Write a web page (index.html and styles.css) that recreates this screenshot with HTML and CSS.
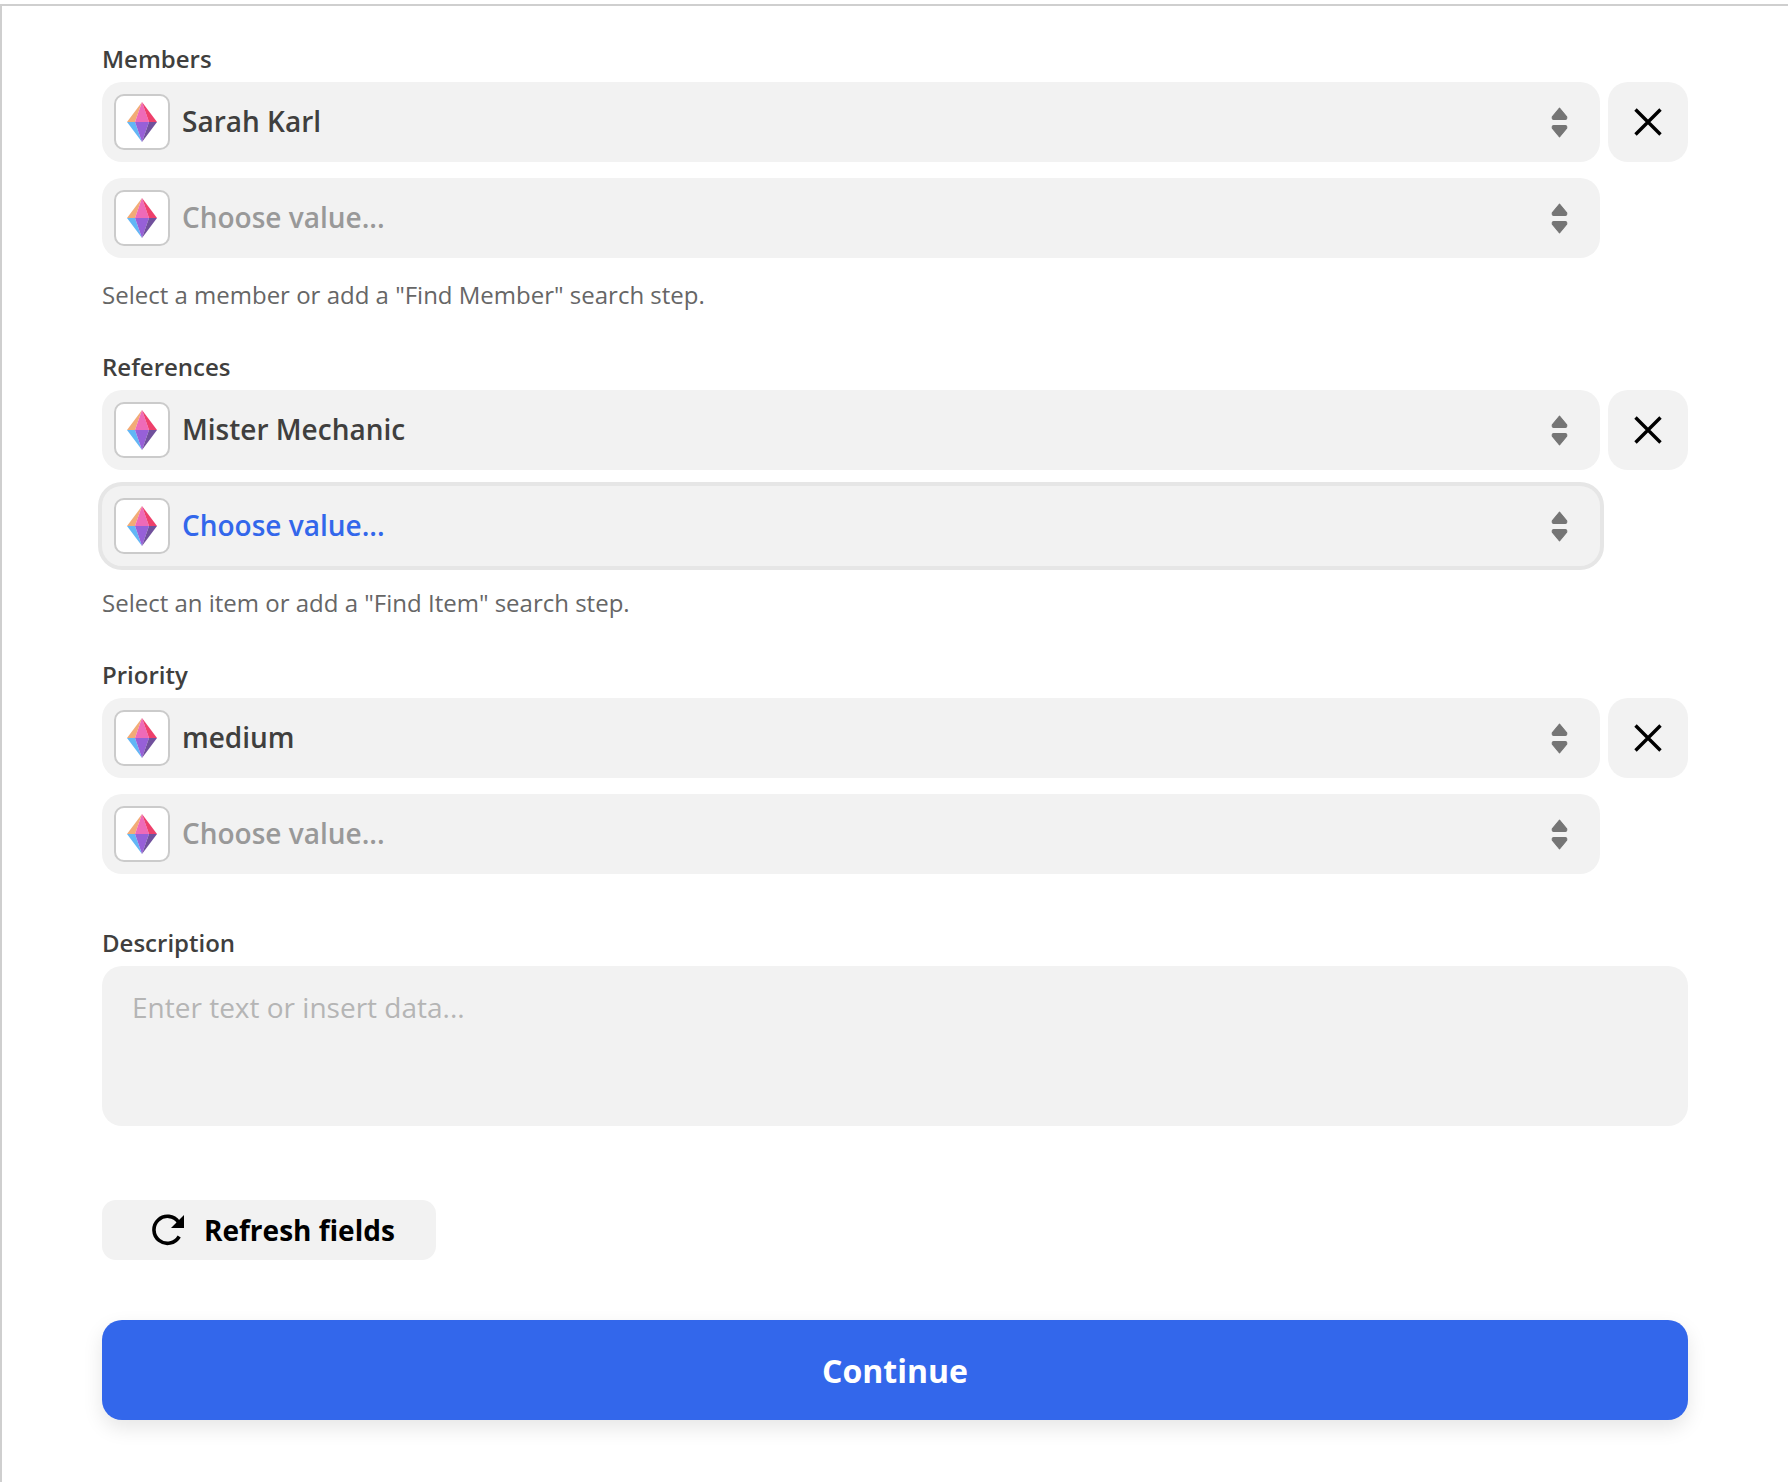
FILE: index.html
```html
<!DOCTYPE html>
<html>
  <head>
    <meta charset="UTF-8" />
    <title>Action setup</title>
    <link rel="stylesheet" href="styles.css">
  </head>
  <body>
    <svg class="defs" width="0" height="0">
      <symbol id="gem" viewBox="0 0 30 40">
        <polygon points="15,0 0,20 8,20" fill="#f2ab76" />
        <polygon points="15,0 8,20 22,20" fill="#ee6ab8" />
        <polygon points="15,0 22,20 30,20" fill="#ee3f6b" />
        <polygon points="0,20 8,20 15,40" fill="#62b6f5" />
        <polygon points="8,20 22,20 15,40" fill="#9760d8" />
        <polygon points="22,20 30,20 15,40" fill="#70509c" />
      </symbol>
      <symbol id="updown" viewBox="0 0 16 30">
        <path d="M8 1 L15 9.5 Q15.5 12 13.5 12 L2.5 12 Q0.5 12 1 9.5 Z" fill="#757575" stroke="#757575" stroke-width="1" stroke-linejoin="round" />
        <path d="M8 29 L15 20.5 Q15.5 18 13.5 18 L2.5 18 Q0.5 18 1 20.5 Z" fill="#757575" stroke="#757575" stroke-width="1" stroke-linejoin="round" />
      </symbol>
      <symbol id="cross" viewBox="0 0 28 28">
        <path d="M1.5 1.5 L26.5 26.5 M26.5 1.5 L1.5 26.5" stroke="#000" stroke-width="3.4" fill="none" />
      </symbol>
    </svg>

    <div class="frame">
      <section class="group">
        <div class="label">Members</div>
        <div class="row">
          <div class="select">
            <span class="app-icon"><svg class="gem"><use href="#gem" /></svg></span>
            <span class="value">Sarah Karl</span>
            <svg class="updown"><use href="#updown" /></svg>
          </div>
          <button class="remove"><svg class="cross"><use href="#cross" /></svg></button>
        </div>
        <div class="row">
          <div class="select">
            <span class="app-icon"><svg class="gem"><use href="#gem" /></svg></span>
            <span class="value empty">Choose value...</span>
            <svg class="updown"><use href="#updown" /></svg>
          </div>
        </div>
        <div class="help">Select a member or add a "Find Member" search step.</div>
      </section>

      <section class="group">
        <div class="label">References</div>
        <div class="row">
          <div class="select">
            <span class="app-icon"><svg class="gem"><use href="#gem" /></svg></span>
            <span class="value">Mister Mechanic</span>
            <svg class="updown"><use href="#updown" /></svg>
          </div>
          <button class="remove"><svg class="cross"><use href="#cross" /></svg></button>
        </div>
        <div class="row">
          <div class="select focused">
            <span class="app-icon"><svg class="gem"><use href="#gem" /></svg></span>
            <span class="value active">Choose value...</span>
            <svg class="updown"><use href="#updown" /></svg>
          </div>
        </div>
        <div class="help">Select an item or add a "Find Item" search step.</div>
      </section>

      <section class="group last-select">
        <div class="label">Priority</div>
        <div class="row">
          <div class="select">
            <span class="app-icon"><svg class="gem"><use href="#gem" /></svg></span>
            <span class="value">medium</span>
            <svg class="updown"><use href="#updown" /></svg>
          </div>
          <button class="remove"><svg class="cross"><use href="#cross" /></svg></button>
        </div>
        <div class="row">
          <div class="select">
            <span class="app-icon"><svg class="gem"><use href="#gem" /></svg></span>
            <span class="value empty">Choose value...</span>
            <svg class="updown"><use href="#updown" /></svg>
          </div>
        </div>
      </section>

      <section class="group description">
        <div class="label">Description</div>
        <div class="textarea">Enter text or insert data...</div>
      </section>

      <button class="refresh">
        <svg class="refresh-icon" viewBox="0 0 33 33">
          <path d="M27.2 22.5 A13.5 13.5 0 1 1 26.6 8.2" fill="none" stroke="#000" stroke-width="3.6" />
          <polygon points="32,1 32,14 19,14" fill="#000" />
        </svg>
        Refresh fields
      </button>

      <button class="continue">Continue</button>
    </div>
  </body>
</html>
```

FILE: styles.css
```css
html, body {
  margin: 0;
  background: #fff;
}
body {
  font-family: 'Open Sans', sans-serif;
  color: #403f3e;
}
button {
  font-family: inherit;
  border: none;
  cursor: pointer;
}
.defs {
  display: block;
  height: 0;
}
.frame {
  box-sizing: border-box;
  height: 1478px;
  margin-top: 4px;
  padding: 38px 100px 0;
  border-top: 2px solid #cfcfcf;
  border-left: 2px solid #cfcfcf;
}
.group {
  width: 1586px;
  margin-bottom: 38px;
}
.label {
  height: 30px;
  margin-bottom: 8px;
  font-size: 24px;
  line-height: 30px;
  font-weight: 600;
}
.row {
  display: flex;
  gap: 8px;
  margin-bottom: 16px;
}
.select {
  display: flex;
  align-items: center;
  box-sizing: border-box;
  width: 1498px;
  height: 80px;
  padding: 0 32px 0 12px;
  background: #f2f2f2;
  border-radius: 20px;
}
.select.focused {
  box-shadow: 0 0 0 4px #e6e6e6;
}
.app-icon {
  display: flex;
  align-items: center;
  justify-content: center;
  box-sizing: border-box;
  width: 56px;
  height: 56px;
  background: #fff;
  border: 2px solid #cbcbcb;
  border-radius: 10px;
}
.gem {
  width: 30px;
  height: 40px;
}
.value {
  flex: 1;
  margin-left: 12px;
  padding-bottom: 2px;
  font-size: 28px;
  font-weight: 600;
}
.value.empty {
  color: #999;
}
.value.active {
  color: #3367eb;
}
.updown {
  width: 17px;
  height: 31px;
}
.remove {
  display: flex;
  align-items: center;
  justify-content: center;
  width: 80px;
  height: 80px;
  padding: 0;
  background: #f2f2f2;
  border-radius: 20px;
}
.cross {
  width: 28px;
  height: 28px;
}
.help {
  margin-top: 18px;
  font-size: 24px;
  line-height: 38px;
  color: #666;
}
.last-select {
  margin-bottom: 54px;
}
.description {
  margin-bottom: 74px;
}
.textarea {
  box-sizing: border-box;
  height: 160px;
  padding: 22px 30px;
  background: #f2f2f2;
  border-radius: 20px;
  font-size: 28px;
  line-height: 38px;
  color: #b5b5b5;
}
.refresh {
  display: flex;
  align-items: center;
  gap: 19px;
  box-sizing: border-box;
  width: 334px;
  height: 60px;
  padding: 0 0 0 50px;
  background: #f2f2f2;
  border-radius: 14px;
  font-size: 28px;
  font-weight: 700;
  color: #000;
}
.refresh-icon {
  width: 33px;
  height: 33px;
}
.continue {
  display: block;
  width: 1586px;
  height: 100px;
  margin-top: 60px;
  background: #3367eb;
  border-radius: 20px;
  box-shadow: 0 8px 20px rgba(0, 0, 0, 0.1);
  font-size: 32px;
  font-weight: 700;
  color: #fff;
}
```
